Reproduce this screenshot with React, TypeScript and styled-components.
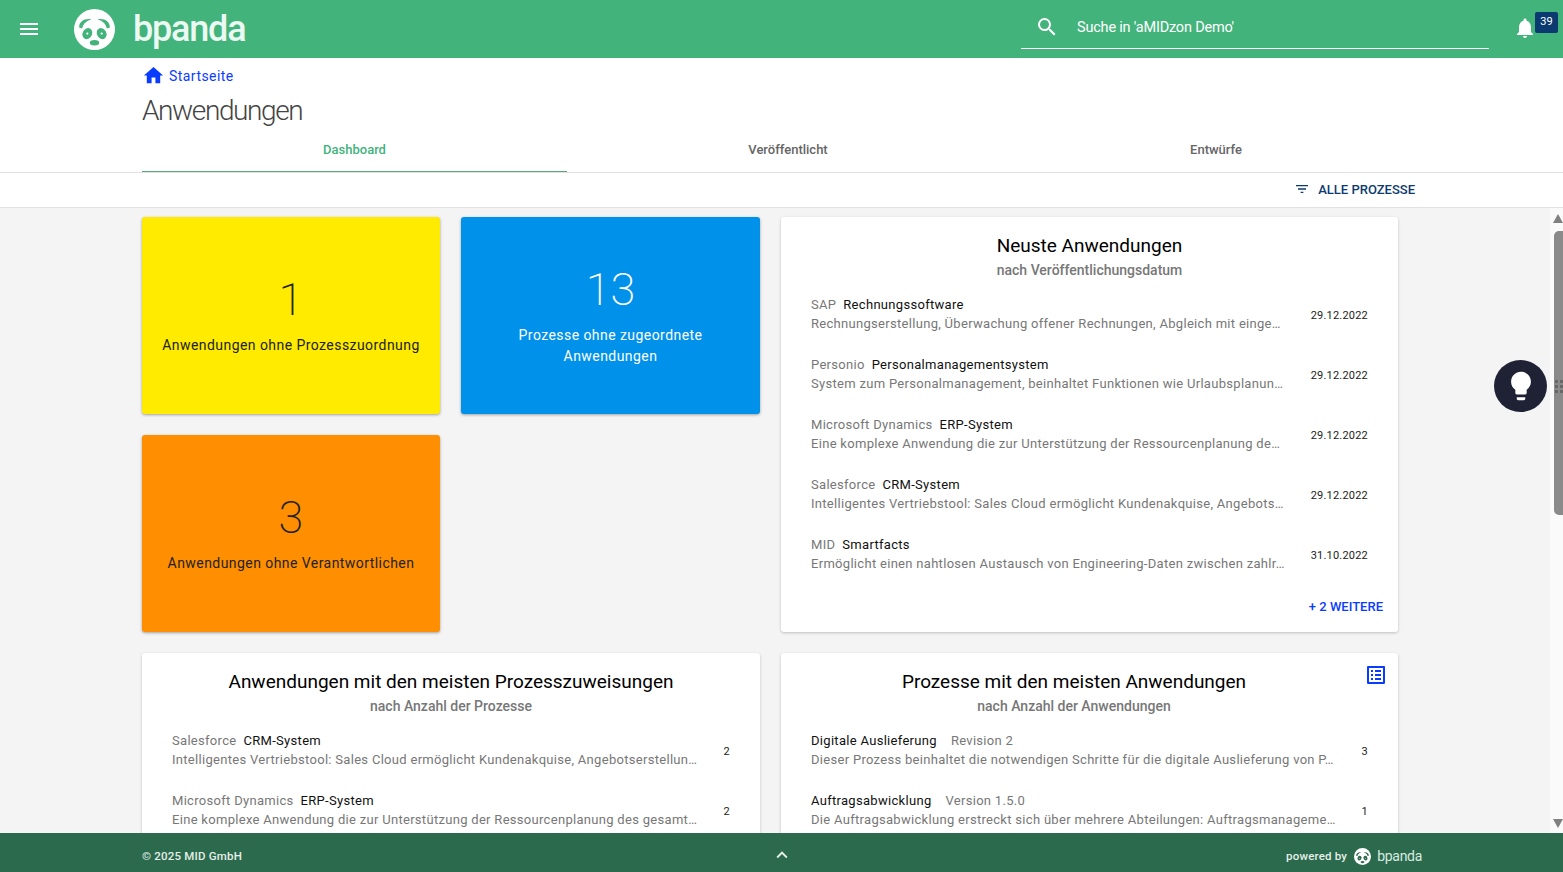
import React from "react";
import styled, { createGlobalStyle } from "styled-components";
import {
  MdMenu,
  MdSearch,
  MdNotifications,
  MdHome,
  MdFilterList,
  MdLightbulb,
  MdKeyboardArrowUp,
  MdOutlineListAlt,
} from "react-icons/md";

const GlobalStyle = createGlobalStyle`
  html, body {
    margin: 0;
    height: 100%;
    overflow: hidden;
    font-family: Roboto, "Liberation Sans", sans-serif;
    background: #f4f4f4;
  }
  #root { height: 100%; }
`;

const Page = styled.div`
  height: 872px;
  display: flex;
  flex-direction: column;
  position: relative;
  overflow: hidden;
`;

const TopBar = styled.header`
  flex: 0 0 58px;
  background: #43b37c;
  display: flex;
  align-items: center;
  color: #fff;
`;

const MenuButton = styled.div`
  width: 58px;
  display: flex;
  justify-content: center;
  font-size: 24px;
  line-height: 0;
`;

const Brand = styled.div`
  display: flex;
  align-items: center;
  margin-left: 16px;
  gap: 18px;
`;

const BrandName = styled.span<{ $small?: boolean }>`
  font-size: ${(p) => (p.$small ? "14px" : "36px")};
  letter-spacing: ${(p) => (p.$small ? "-0.3px" : "-1.2px")};
  margin-left: ${(p) => (p.$small ? "-1px" : "0")};
  line-height: 1;
  font-weight: ${(p) => (p.$small ? 400 : 500)};
  color: ${(p) => (p.$small ? "#d9ece2" : "#ecf8f2")};
`;

const SearchField = styled.div`
  align-self: flex-start;
  margin-left: auto;
  width: 468px;
  height: 49px;
  box-sizing: border-box;
  border-bottom: 1px solid #fff;
  display: flex;
  align-items: center;
  font-size: 14.5px;
  letter-spacing: -0.2px;
  padding: 6px 0 0 14px;
  gap: 18px;
  svg { font-size: 24px; flex: none; }
`;

const BellArea = styled.div`
  flex: 0 0 74px;
  height: 58px;
  position: relative;
`;

const Bell = styled(MdNotifications)`
  position: absolute;
  left: 24px;
  top: 16px;
  font-size: 24px;
`;

const Badge = styled.span`
  position: absolute;
  right: 5px;
  top: 12px;
  width: 23px;
  height: 21px;
  border-radius: 2px;
  background: #0b3a70;
  color: #fff;
  font-size: 11px;
  text-align: center;
  line-height: 19px;
`;

const PageHead = styled.div`
  background: #fff;
  padding: 7px 0 0 142px;
`;

const Breadcrumb = styled.div`
  display: flex;
  align-items: center;
  gap: 4px;
  color: #0a3cff;
  font-size: 14px;
  letter-spacing: 0.45px;
  height: 21px;
  svg { font-size: 23px; }
`;

const PageTitle = styled.h1`
  margin: 6px 0 0;
  font-size: 28px;
  font-weight: 300;
  letter-spacing: -1.4px;
  line-height: 37px;
  color: #444;
`;

const TabRow = styled.nav`
  display: grid;
  grid-template-columns: 425px 442px 414px;
  margin-top: 3px;
`;

const Tab = styled.div<{ $active?: boolean }>`
  height: 40px;
  box-sizing: border-box;
  padding-top: 10px;
  text-align: center;
  font-size: 13px;
  font-weight: 500;
  color: ${(p) => (p.$active ? "#43b37c" : "#666")};
  border-bottom: ${(p) => (p.$active ? "1px solid #5aa67f" : "none")};
`;

const FilterBar = styled.div`
  flex: 0 0 36px;
  box-sizing: border-box;
  background: #fff;
  border-top: 1px solid #e2e2e2;
  border-bottom: 1px solid #e2e2e2;
  display: flex;
  align-items: center;
  justify-content: flex-end;
  padding: 0 148px 2px 0;
  gap: 8px;
  color: #0b3a70;
  font-size: 13px;
  font-weight: 500;
  svg { font-size: 16px; }
`;

const Body = styled.div`
  flex: 1;
  min-height: 0;
  display: flex;
  overflow: hidden;
`;

const Dashboard = styled.main`
  flex: 1;
  padding: 9px 0 0 142px;
  display: grid;
  grid-template-columns: 298px 299px 617px;
  grid-auto-rows: min-content;
  column-gap: 21px;
  row-gap: 21px;
  align-content: start;
`;

const Tile = styled.section<{ $bg: string; $fg: string; $col: number; $row: number }>`
  grid-column: ${(p) => p.$col};
  grid-row: ${(p) => p.$row};
  height: 197px;
  border-radius: 3px;
  background: ${(p) => p.$bg};
  color: ${(p) => p.$fg};
  box-shadow: 0 1px 3px rgba(0, 0, 0, 0.35);
  display: flex;
  flex-direction: column;
  align-items: center;
  justify-content: center;
  text-align: center;
  padding: 0 14px 3px;
  box-sizing: border-box;
`;

const TileValue = styled.div`
  font-size: 45px;
  font-weight: 200;
  line-height: 56px;
`;

const TileLabel = styled.div`
  margin-top: 7px;
  font-size: 14px;
  letter-spacing: 0.44px;
  line-height: 21px;
`;

const Card = styled.section`
  position: relative;
  background: #fff;
  border-radius: 3px;
  box-shadow: 0 1px 3px rgba(0, 0, 0, 0.22);
  box-sizing: border-box;
  padding: 17px 14px 0 30px;
  min-width: 0;
`;

const NewestCard = styled(Card)`
  grid-column: 3;
  grid-row: 1 / span 2;
  height: 415px;
`;

const BottomRow = styled.div`
  grid-column: 1 / span 3;
  display: grid;
  grid-template-columns: 618px 617px;
  column-gap: 21px;
`;

const BottomCard = styled(Card)`
  height: 300px;
`;

const CardHead = styled.div<{ $hasAction?: boolean }>`
  margin-left: -16px;
  padding-right: ${(p) => (p.$hasAction ? "31px" : "0")};
  text-align: center;
`;

const CardTitle = styled.h2`
  margin: 0;
  font-size: 19px;
  font-weight: 400;
  line-height: 23px;
  color: #000;
`;

const CardSub = styled.div`
  margin-top: 3px;
  font-size: 14px;
  font-weight: 500;
  line-height: 21px;
  color: #777;
`;

const ItemList = styled.div`
  margin-top: 5px;
`;

const Item = styled.div`
  height: 60px;
  display: flex;
  align-items: flex-start;
  padding-top: 9px;
  box-sizing: border-box;
`;

const ItemText = styled.div`
  flex: 1;
  min-width: 0;
  line-height: 19px;
  font-size: 13px;
  letter-spacing: 0.3px;
`;

const ItemHead = styled.div`
  display: flex;
  gap: 7px;
  color: #111;
`;

const Muted = styled.span<{ $gapLeft?: boolean }>`
  color: #777;
  margin-left: ${(p) => (p.$gapLeft ? "7px" : "0")};
`;

const Description = styled.div`
  color: #777;
  white-space: nowrap;
`;

const ItemMeta = styled.div<{ $narrow?: boolean }>`
  flex: 0 0 ${(p) => (p.$narrow ? "48px" : "99px")};
  box-sizing: border-box;
  padding: 13px 16px 0 0;
  text-align: right;
  font-size: 11px;
  letter-spacing: 0.2px;
  line-height: 15px;
  color: #222;
`;

const MoreLink = styled.div`
  position: absolute;
  right: 15px;
  bottom: 18px;
  color: #0a3cff;
  font-size: 13px;
  font-weight: 500;
`;

const ListToggle = styled.div`
  position: absolute;
  right: 10px;
  top: 10px;
  color: #0a3cff;
  font-size: 24px;
  line-height: 0;
`;

const ScrollTrack = styled.div`
  flex: 0 0 13px;
  background: #fafafa;
  position: relative;
`;

const ScrollThumb = styled.div`
  position: absolute;
  top: 23px;
  right: 0;
  width: 9px;
  height: 284px;
  background: #8a8a8a;
  border-radius: 5px 0 0 5px;
`;

const ScrollArrow = styled.div<{ $down?: boolean }>`
  position: absolute;
  right: 0;
  ${(p) => (p.$down ? "bottom: 5px;" : "top: 6px;")}
  width: 0;
  height: 0;
  border-left: 5px solid transparent;
  border-right: 5px solid transparent;
  ${(p) => (p.$down ? "border-top: 9px solid #808080;" : "border-bottom: 9px solid #808080;")}
`;

const HelpBubble = styled.div`
  position: absolute;
  left: 1494px;
  top: 360px;
  width: 53px;
  height: 52px;
  border-radius: 50%;
  background: #1f2135;
  color: #fff;
  display: flex;
  align-items: center;
  justify-content: center;
  font-size: 34px;
`;

const DragDots = styled.div`
  position: absolute;
  left: 1554px;
  top: 379px;
  width: 9px;
  height: 15px;
  background-image: radial-gradient(circle, #666 1.4px, transparent 1.6px);
  background-size: 5px 5px;
`;

const Footer = styled.footer`
  flex: 0 0 39px;
  box-sizing: border-box;
  background: #2b6a4c;
  color: #e6efe9;
  display: grid;
  grid-template-columns: 1fr auto 1fr;
  align-items: center;
  padding: 7px 141px 0 142px;
  font-size: 11.5px;
  font-weight: 500;
  letter-spacing: 0.2px;
`;

const FooterUp = styled.div`
  font-size: 22px;
  line-height: 0;
  margin-top: -2px;
`;

const PoweredBy = styled.div`
  justify-self: end;
  display: flex;
  align-items: center;
  gap: 7px;
`;

const LogoMark = styled.span<{ $ink: string }>`
  --panda-ink: ${(p) => p.$ink};
  display: inline-flex;
  color: #fff;
`;

const PandaLogo = ({ size }: { size: number }) => (
  <svg width={size} height={size} viewBox="0 0 40 40" aria-hidden="true">
    <circle cx="20" cy="20" r="20" fill="currentColor" />
    <path d="M5 18C5 12 10 9 17 10 12 12 9 14 8 19Z" fill="var(--panda-ink)" />
    <path d="M35 18C35 12 30 9 23 10 28 12 31 14 32 19Z" fill="var(--panda-ink)" />
    <ellipse cx="13" cy="24" rx="4.6" ry="5.6" fill="var(--panda-ink)" transform="rotate(28 13 24)" />
    <ellipse cx="27" cy="24" rx="4.6" ry="5.6" fill="var(--panda-ink)" transform="rotate(-28 27 24)" />
    <circle cx="13" cy="24" r="1.1" fill="currentColor" />
    <circle cx="27" cy="24" r="1.1" fill="currentColor" />
    <ellipse cx="20" cy="33" rx="4.6" ry="2.7" fill="var(--panda-ink)" />
  </svg>
);

type Row = { vendor: string; name: string; text: string; meta: string };

const newest: Row[] = [
  { vendor: "SAP", name: "Rechnungssoftware", text: "Rechnungserstellung, Überwachung offener Rechnungen, Abgleich mit einge…", meta: "29.12.2022" },
  { vendor: "Personio", name: "Personalmanagementsystem", text: "System zum Personalmanagement, beinhaltet Funktionen wie Urlaubsplanun…", meta: "29.12.2022" },
  { vendor: "Microsoft Dynamics", name: "ERP-System", text: "Eine komplexe Anwendung die zur Unterstützung der Ressourcenplanung de…", meta: "29.12.2022" },
  { vendor: "Salesforce", name: "CRM-System", text: "Intelligentes Vertriebstool: Sales Cloud ermöglicht Kundenakquise, Angebots…", meta: "29.12.2022" },
  { vendor: "MID", name: "Smartfacts", text: "Ermöglicht einen nahtlosen Austausch von Engineering-Daten zwischen zahlr…", meta: "31.10.2022" },
];

const topApps: Row[] = [
  { vendor: "Salesforce", name: "CRM-System", text: "Intelligentes Vertriebstool: Sales Cloud ermöglicht Kundenakquise, Angebotserstellun…", meta: "2" },
  { vendor: "Microsoft Dynamics", name: "ERP-System", text: "Eine komplexe Anwendung die zur Unterstützung der Ressourcenplanung des gesamt…", meta: "2" },
];

const topProcesses: Row[] = [
  { vendor: "Digitale Auslieferung", name: "Revision 2", text: "Dieser Prozess beinhaltet die notwendigen Schritte für die digitale Auslieferung von P…", meta: "3" },
  { vendor: "Auftragsabwicklung", name: "Version 1.5.0", text: "Die Auftragsabwicklung erstreckt sich über mehrere Abteilungen: Auftragsmanageme…", meta: "1" },
];

const RowList = ({ rows, narrow, swapTone }: { rows: Row[]; narrow?: boolean; swapTone?: boolean }) => (
  <ItemList>
    {rows.map((r) => (
      <Item key={r.vendor}>
        <ItemText>
          <ItemHead>
            {swapTone ? <span>{r.vendor}</span> : <Muted>{r.vendor}</Muted>}
            {swapTone ? <Muted $gapLeft>{r.name}</Muted> : <span>{r.name}</span>}
          </ItemHead>
          <Description>{r.text}</Description>
        </ItemText>
        <ItemMeta $narrow={narrow}>{r.meta}</ItemMeta>
      </Item>
    ))}
  </ItemList>
);

export default function App() {
  return (
    <Page>
      <GlobalStyle />
      <TopBar>
        <MenuButton>
          <MdMenu />
        </MenuButton>
        <Brand>
          <LogoMark $ink="#43b37c">
            <PandaLogo size={41} />
          </LogoMark>
          <BrandName>bpanda</BrandName>
        </Brand>
        <SearchField>
          <MdSearch />
          <span>Suche in 'aMIDzon Demo'</span>
        </SearchField>
        <BellArea>
          <Bell />
          <Badge>39</Badge>
        </BellArea>
      </TopBar>

      <PageHead>
        <Breadcrumb>
          <MdHome />
          <span>Startseite</span>
        </Breadcrumb>
        <PageTitle>Anwendungen</PageTitle>
        <TabRow>
          <Tab $active>Dashboard</Tab>
          <Tab>Veröffentlicht</Tab>
          <Tab>Entwürfe</Tab>
        </TabRow>
      </PageHead>

      <FilterBar>
        <MdFilterList />
        <span>ALLE PROZESSE</span>
      </FilterBar>

      <Body>
        <Dashboard>
          <Tile $bg="#ffeb00" $fg="#222" $col={1} $row={1}>
            <TileValue>1</TileValue>
            <TileLabel>Anwendungen ohne Prozesszuordnung</TileLabel>
          </Tile>
          <Tile $bg="#0091ea" $fg="#fff" $col={2} $row={1}>
            <TileValue>13</TileValue>
            <TileLabel>
              Prozesse ohne zugeordnete
              <br />
              Anwendungen
            </TileLabel>
          </Tile>
          <Tile $bg="#ff8f00" $fg="#222" $col={1} $row={2}>
            <TileValue>3</TileValue>
            <TileLabel>Anwendungen ohne Verantwortlichen</TileLabel>
          </Tile>
          <NewestCard>
            <CardHead>
              <CardTitle>Neuste Anwendungen</CardTitle>
              <CardSub>nach Veröffentlichungsdatum</CardSub>
            </CardHead>
            <RowList rows={newest} />
            <MoreLink>+ 2 WEITERE</MoreLink>
          </NewestCard>
          <BottomRow>
            <BottomCard>
              <CardHead>
                <CardTitle>Anwendungen mit den meisten Prozesszuweisungen</CardTitle>
                <CardSub>nach Anzahl der Prozesse</CardSub>
              </CardHead>
              <RowList rows={topApps} narrow />
            </BottomCard>
            <BottomCard>
              <ListToggle>
                <MdOutlineListAlt />
              </ListToggle>
              <CardHead $hasAction>
                <CardTitle>Prozesse mit den meisten Anwendungen</CardTitle>
                <CardSub>nach Anzahl der Anwendungen</CardSub>
              </CardHead>
              <RowList rows={topProcesses} narrow swapTone />
            </BottomCard>
          </BottomRow>
        </Dashboard>
        <ScrollTrack>
          <ScrollArrow />
          <ScrollThumb />
          <ScrollArrow $down />
        </ScrollTrack>
      </Body>

      <Footer>
        <span>© 2025 MID GmbH</span>
        <FooterUp>
          <MdKeyboardArrowUp />
        </FooterUp>
        <PoweredBy>
          <span>powered by</span>
          <LogoMark $ink="#2b6a4c">
            <PandaLogo size={17} />
          </LogoMark>
          <BrandName $small>bpanda</BrandName>
        </PoweredBy>
      </Footer>

      <HelpBubble>
        <MdLightbulb />
      </HelpBubble>
      <DragDots />
    </Page>
  );
}
